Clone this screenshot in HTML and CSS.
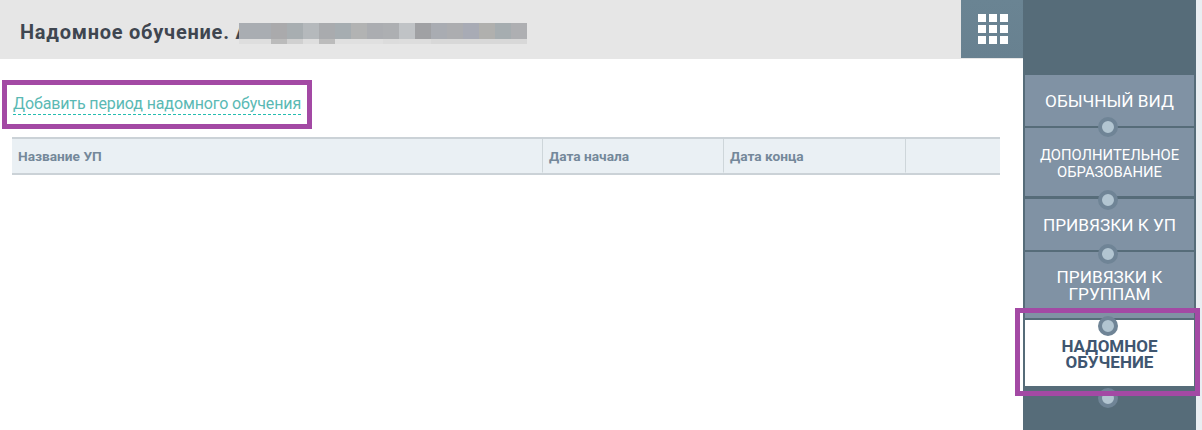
FILE: index.html
```html
<!DOCTYPE html>
<html lang="ru">
<head>
<meta charset="utf-8">
<title>Надомное обучение</title>
<link rel="stylesheet" href="styles.css">
</head>
<body>
<div class="page">
  <main class="main">
    <header class="header">
      <h1 class="title">Надомное обучение. А<span class="blur"></span></h1>
      <button class="apps" type="button" aria-label="Меню">
        <svg width="30" height="30" viewBox="0 0 30 30" fill="#fff">
          <rect x="0" y="0" width="8" height="8"/><rect x="11" y="0" width="8" height="8"/><rect x="22" y="0" width="8" height="8"/>
          <rect x="0" y="11" width="8" height="8"/><rect x="11" y="11" width="8" height="8"/><rect x="22" y="11" width="8" height="8"/>
          <rect x="0" y="22" width="8" height="8"/><rect x="11" y="22" width="8" height="8"/><rect x="22" y="22" width="8" height="8"/>
        </svg>
      </button>
    </header>
    <section class="content">
      <div class="link-row"><a class="add-link" href="#">Добавить период надомного обучения</a></div>
      <table class="grid">
        <thead>
          <tr>
            <th class="col-name">Название УП</th>
            <th class="col-date">Дата начала</th>
            <th class="col-date">Дата конца</th>
            <th class="col-rest"></th>
          </tr>
        </thead>
      </table>
    </section>
    <div class="mark mark-link"></div>
  </main>
  <nav class="side">
    <a class="item item-1" href="#"><span>Обычный вид</span><i class="dot dot-1"></i></a>
    <a class="item item-2" href="#"><span class="small">Дополнительное образование</span><i class="dot dot-2"></i></a>
    <a class="item item-3" href="#"><span>Привязки к УП</span><i class="dot dot-2"></i></a>
    <a class="item item-4" href="#"><span>Привязки к группам</span></a>
    <a class="item item-5 active" href="#"><i class="dot dot-4"></i><span>Надомное обучение</span><i class="dot dot-5"></i></a>
    <div class="mark mark-side"></div>
  </nav>
  <div class="strip"></div>
</div>
</body>
</html>
```
FILE: styles.css
```css
* { box-sizing: border-box; }
html, body { margin: 0; padding: 0; height: 100%; overflow: hidden; background: #fff; }
body { font-family: Roboto, "Noto Sans", sans-serif; }

.page { display: flex; width: 1202px; height: 430px; position: relative; }

.main { width: 1023px; flex: none; position: relative; }

.header { display: flex; height: 59px; background: #e6e6e6; }
.title {
  position: relative;
  flex: 1;
  margin: 0;
  padding: 19px 0 0 20px;
  font-size: 20px;
  line-height: 26px;
  font-weight: 700;
  color: #3f4650;
  letter-spacing: 0.75px;
}
.blur {
  position: absolute;
  left: 239px;
  top: 23px;
  width: 288px;
  height: 21px;
  background-image:
    linear-gradient(90deg,
      #a9adb2 0 32px, #aaaaac 32px 48px, #a8aeb1 48px 64px, #b5b9bc 64px 80px, #a9abae 80px 96px,
      #a6adb1 96px 112px, #b2b3b3 112px 128px, #abadb1 128px 144px, #adafb2 144px 160px, #c0c3c6 160px 176px,
      #a0a1a4 176px 192px, #a9acb2 192px 208px, #acadb0 208px 224px, #a8abb5 224px 240px, #b0b0ae 240px 256px,
      #a6adb0 256px 272px, #aeafb2 272px 288px),
    linear-gradient(90deg,
      #dedede 0 32px, #bbbbbb 32px 48px, #d0d0d0 48px 64px, #dedede 64px 80px, #bcbcbc 80px 96px,
      #e0e0e0 96px 144px, #dcdcdc 144px 160px, #dddddd 160px 192px, #d8d8d8 192px 288px);
  background-size: 288px 16px, 288px 5px;
  background-position: 0 0, 0 16px;
  background-repeat: no-repeat;
}
.apps {
  flex: none;
  width: 62px;
  height: 58px;
  padding: 0;
  border: 0;
  display: flex;
  align-items: center;
  justify-content: center;
  background: linear-gradient(180deg, #6a8493, #688190);
}
.apps svg { display: block; margin-top: -1px; margin-left: 1px; }

.content { padding: 0 23px 0 12px; }
.link-row { height: 78px; padding-top: 35px; }
.add-link {
  display: inline-block;
  margin-left: 1px;
  font-size: 16px;
  line-height: 20px;
  letter-spacing: -0.12px;
  color: #5ab9b4;
  text-decoration: none;
  border-bottom: 1px dashed #23bdb0;
}

.grid {
  width: 988px;
  height: 38px;
  border-collapse: separate;
  border-spacing: 0;
  table-layout: fixed;
  background: #fff;
  border-top: 2px solid #cbd2d7;
  border-bottom: 2px solid #cbd2d7;
}
.grid th {
  height: 34px;
  padding: 0 0 0 6px;
  text-align: left;
  vertical-align: middle;
  font-size: 13.7px;
  font-weight: 700;
  color: #74889a;
  background: #eaf0f4;
  border-right: 1px solid #ced6da;
  border-bottom: 1px solid #eaf0f4;
}
.grid .col-name { width: 531px; }
.grid .col-date { width: 181px; }
.grid .col-date + .col-date { width: 182px; }
.grid .col-rest { border-right: 0; }

.mark { position: absolute; border: 5px solid #a349a4; pointer-events: none; z-index: 3; }
.mark-link { left: 2px; top: 80px; width: 310px; height: 49px; }

.side {
  position: relative;
  width: 173px;
  flex: none;
  padding: 75px 2px 0;
  background: #566c79;
  display: flex;
  flex-direction: column;
}
.item {
  position: relative;
  display: flex;
  align-items: center;
  justify-content: center;
  padding-top: 2px;
  text-align: center;
  background: #8092a4;
  color: #fff;
  text-decoration: none;
  text-transform: uppercase;
  font-size: 17.2px;
  font-weight: 400;
  line-height: 17px;
}
.item .small { font-size: 14.8px; line-height: 17px; }
.item-1 { height: 51px; margin-bottom: 2px; }
.item-2 { height: 68px; margin-bottom: 3px; padding-top: 3px; }
.item-3 { height: 51px; margin-bottom: 2px; }
.item-4 { height: 66px; margin-bottom: 2px; padding-top: 1px; }
.item-5 { height: 66px; line-height: 16px; }
.item-4 span, .item-5 span { width: 130px; }
.active { background: #fff; color: #3f5670; font-size: 17px; font-weight: 700; }

.dot {
  position: absolute;
  left: 73px;
  width: 20px;
  height: 20px;
  border-radius: 50%;
  background: #b2c5d1;
  border: 4px solid #6f8496;
  z-index: 1;
}
.dot-1 { bottom: -11px; }
.dot-2 { bottom: -14px; }
.dot-4 { top: -4px; }
.dot-5 { bottom: -22px; }

.mark-side { left: -8px; top: 308px; width: 185px; height: 88px; }

.strip { flex: 1; background: #e9eef2; }
```
